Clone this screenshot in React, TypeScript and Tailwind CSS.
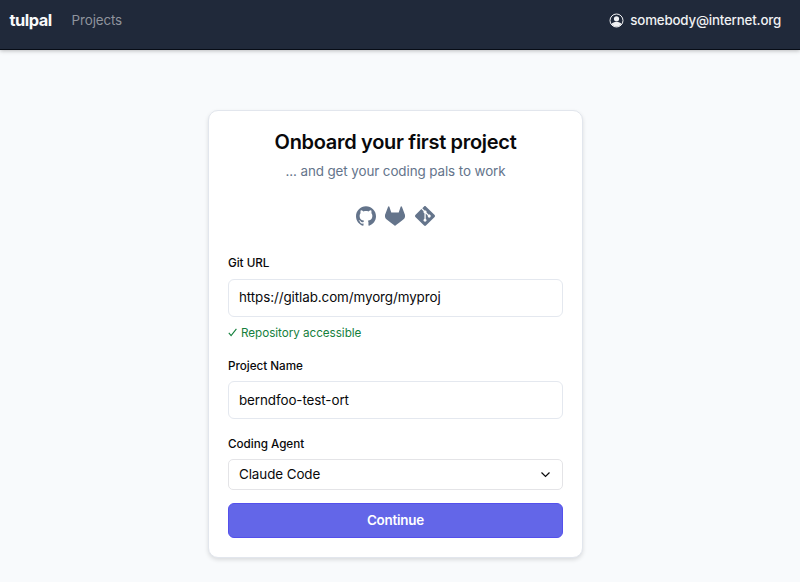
import { useState } from 'react';
import { SiGit, SiGithub, SiGitlab } from 'react-icons/si';

interface FieldProps {
  id: string;
  label: string;
  value: string;
  onChange: (value: string) => void;
}

function UserIcon(): JSX.Element {
  return (
    <svg className="h-[15px] w-[15px]" viewBox="0 0 15 15" fill="none">
      <circle cx="7.5" cy="7.5" r="6.5" stroke="currentColor" strokeWidth="1" />
      <circle cx="7.5" cy="5.8" r="2.6" fill="currentColor" />
      <path d="M2.5 11.1c1-1.5 2.8-2 5-2s4 .5 5 2a6.2 6.2 0 0 1-5 2.6 6.2 6.2 0 0 1-5-2.6Z" fill="currentColor" />
    </svg>
  );
}

function Header(): JSX.Element {
  return (
    <header className="flex h-[50px] items-center border-b border-[#070c16] bg-[#20293a] pt-px pr-[19px] pb-[9px] pl-[9.5px] shadow-[0_1px_4px_rgba(0,0,0,0.25)]">
      <span className="text-[16.4px] font-bold tracking-[-0.5px] text-[#f8f9fb]">tulpal</span>
      <nav className="ml-5 text-[13.4px] tracking-[-0.12px] text-[#8f949d]">Projects</nav>
      <div className="ml-auto flex items-center gap-1.5 text-[13.3px] font-medium tracking-[-0.18px] text-[#f0f1f3]">
        <UserIcon />
        <span className="pt-px">somebody@internet.org</span>
      </div>
    </header>
  );
}

function Field({ id, label, value, onChange }: FieldProps): JSX.Element {
  return (
    <div className="flex flex-col">
      <label htmlFor={id} className="text-[11.7px] leading-4 font-medium tracking-[-0.03px]">
        {label}
      </label>
      <input
        id={id}
        value={value}
        onChange={(e) => onChange(e.target.value)}
        className="mt-[7.5px] h-[38px] w-full rounded-md border border-[#e4e8ef] bg-white px-2.5 pb-px text-[13.4px] tracking-[-0.08px] outline-none"
      />
    </div>
  );
}

export default function App(): JSX.Element {
  const [gitUrl, setGitUrl] = useState<string>('https://gitlab.com/myorg/myproj');
  const [projectName, setProjectName] = useState<string>('berndfoo-test-ort');

  return (
    <div className="flex h-[582px] flex-col overflow-hidden bg-[#f8fafc] font-['Inter',sans-serif] text-[#09090b]">
      <Header />
      <main className="flex justify-center pt-[60px] pr-[9px]">
        <form className="flex h-[448px] w-[375px] flex-col rounded-[10px] border border-[#e2e6ed] bg-white px-[19px] pt-[18px] shadow-[0_2px_4px_rgba(0,0,0,0.12)]">
          <h1 className="text-center text-[20px] leading-[26px] font-semibold tracking-[-0.31px]">
            Onboard your first project
          </h1>
          <p className="mt-1.5 text-center text-[13.4px] leading-5 tracking-[-0.09px] text-[#64748b]">
            ... and get your coding pals to work
          </p>
          <div className="mt-[25px] flex justify-center gap-[9.5px] pr-px text-[#64748b]">
            <SiGithub className="h-5 w-5" />
            <SiGitlab className="h-5 w-5" />
            <SiGit className="h-5 w-5" />
          </div>
          <div className="mt-[29px]">
            <Field id="git-url" label="Git URL" value={gitUrl} onChange={setGitUrl} />
          </div>
          <p className="mt-[8.5px] flex h-4 items-center gap-1 text-[11.7px] tracking-[-0.04px] text-[#15803d]">
            <svg className="mb-px h-[9px] w-[9px]" viewBox="0 0 9 9" fill="none" stroke="currentColor" strokeWidth="1.1">
              <path d="m.8 4.8 2.3 2.8L8.4.8" />
            </svg>
            <span className="pt-px">Repository accessible</span>
          </p>
          <div className="mt-[16.5px]">
            <Field id="project-name" label="Project Name" value={projectName} onChange={setProjectName} />
          </div>
          <span className="mt-[16.5px] text-[11.7px] leading-4 font-medium tracking-[-0.03px]">Coding Agent</span>
          <button
            type="button"
            className="mt-[7px] flex h-[31px] shrink-0 items-center justify-between rounded-[5px] border border-[#e4e4e7] pr-3 pl-2.5 text-[13.4px] tracking-[-0.08px]"
          >
            <span className="pt-px">Claude Code</span>
            <svg className="h-[9px] w-[9px]" viewBox="0 0 9 9" fill="none" stroke="currentColor" strokeWidth="1.2">
              <path d="m.5 2.5 4 4 4-4" />
            </svg>
          </button>
          <button
            type="submit"
            className="mt-[13px] h-[35px] shrink-0 rounded-md border border-[#5450ec] bg-[#6366e8] pt-px text-[13.4px] font-semibold tracking-[-0.2px] text-white"
          >
            Continue
          </button>
        </form>
      </main>
    </div>
  );
}
